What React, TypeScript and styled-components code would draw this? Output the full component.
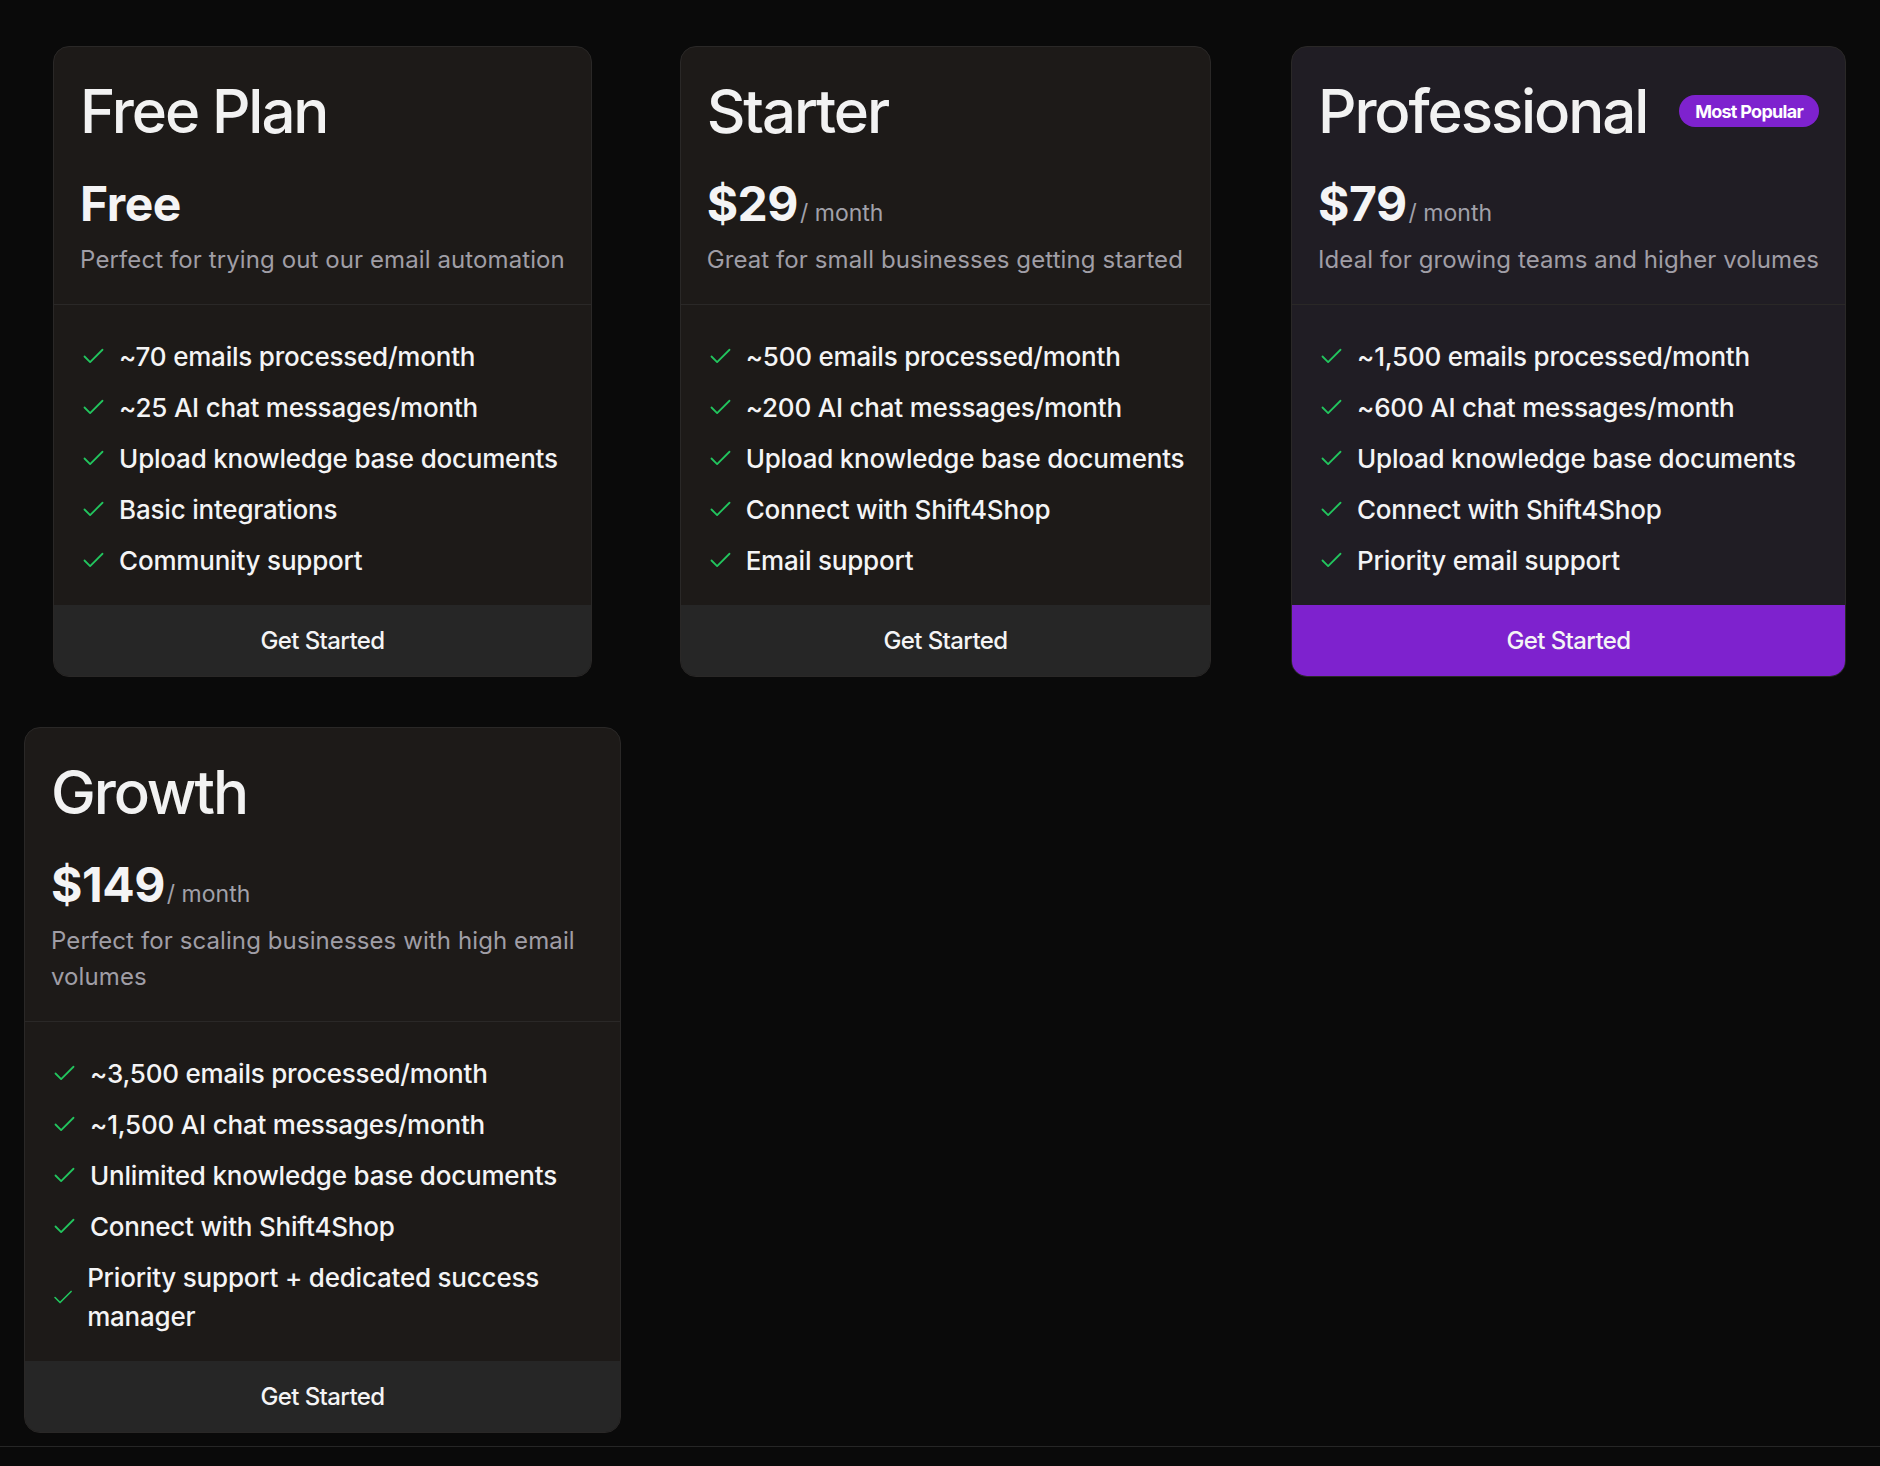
import React from 'react'
import styled, { createGlobalStyle } from 'styled-components'
import { Check } from 'lucide-react'

type Plan = {
  name: string
  price: string
  period?: string
  description: string
  features: string[]
  popular?: boolean
}

const plans: Plan[] = [
  {
    name: 'Free Plan',
    price: 'Free',
    description: 'Perfect for trying out our email automation',
    features: [
      '~70 emails processed/month',
      '~25 AI chat messages/month',
      'Upload knowledge base documents',
      'Basic integrations',
      'Community support',
    ],
  },
  {
    name: 'Starter',
    price: '$29',
    period: '/ month',
    description: 'Great for small businesses getting started',
    features: [
      '~500 emails processed/month',
      '~200 AI chat messages/month',
      'Upload knowledge base documents',
      'Connect with Shift4Shop',
      'Email support',
    ],
  },
  {
    name: 'Professional',
    price: '$79',
    period: '/ month',
    description: 'Ideal for growing teams and higher volumes',
    popular: true,
    features: [
      '~1,500 emails processed/month',
      '~600 AI chat messages/month',
      'Upload knowledge base documents',
      'Connect with Shift4Shop',
      'Priority email support',
    ],
  },
  {
    name: 'Growth',
    price: '$149',
    period: '/ month',
    description: 'Perfect for scaling businesses with high email volumes',
    features: [
      '~3,500 emails processed/month',
      '~1,500 AI chat messages/month',
      'Unlimited knowledge base documents',
      'Connect with Shift4Shop',
      'Priority support + dedicated success manager',
    ],
  },
]

const Pricing = () => {
  return (
    <Page>
      <GlobalStyle />
      <Main>
        <Grid>
          {plans.map((plan) => (
            <Card key={plan.name} $popular={plan.popular}>
              <Header>
                <TitleRow>
                  <Title>{plan.name}</Title>
                  {plan.popular && <Badge>Most Popular</Badge>}
                </TitleRow>
                <PriceRow>
                  <Price>{plan.price}</Price>
                  {plan.period && <Period>{plan.period}</Period>}
                </PriceRow>
                <Description>{plan.description}</Description>
              </Header>
              <FeatureList>
                {plan.features.map((f) => (
                  <FeatureItem key={f}>
                    <Check size={27} strokeWidth={1.6} color="#22c55e" />
                    <span>{f}</span>
                  </FeatureItem>
                ))}
              </FeatureList>
              <Button $popular={plan.popular}>Get Started</Button>
            </Card>
          ))}
        </Grid>
      </Main>
      <Footer />
    </Page>
  )
}

export default Pricing

const GlobalStyle = createGlobalStyle`
body {
  margin: 0;
  background: #0a0a0a;
  font-family: Inter, "Noto Sans", sans-serif;
  color: #f4f4f5;
}
`
const Page = styled.div`
min-height: 1466px;
display: flex;
flex-direction: column;
`
const Main = styled.main`
padding: 46px 0 13px 0;
`
const Grid = styled.div`
display: grid;
grid-template-columns: repeat(3, 597px);
column-gap: 26px;
row-gap: 50px;
padding-left: 24px;
justify-items: center;
align-items: start;
`
const Card = styled.div<{ $popular?: boolean }>`
max-width: 100%;
box-sizing: border-box;
display: flex;
flex-direction: column;
background: ${(p) => (p.$popular ? '#201d24' : '#1d1a18')};
border: 1px solid #2a2827;
border-radius: 16px;
overflow: hidden;
`
const Header = styled.div`
padding: 34px 26px 26px;
border-bottom: 1px solid #2a2827;
`
const TitleRow = styled.div`
display: flex;
align-items: center;
justify-content: space-between;
gap: 24px;
`
const Title = styled.h2`
margin: 0;
font-size: 60px;
line-height: 60px;
font-weight: 500;
letter-spacing: -0.035em;
color: #f2f2f2;
`
const Badge = styled.span`
background: #7e22ce;
color: #fff;
border-radius: 999px;
height: 32px;
padding: 0 16px;
display: inline-flex;
align-items: center;
font-size: 18px;
font-weight: 700;
letter-spacing: -0.04em;
`
const PriceRow = styled.div`
display: flex;
align-items: baseline;
margin-top: 39px;
`
const Price = styled.span`
font-size: 48px;
line-height: 48px;
font-weight: 700;
letter-spacing: -0.01em;
color: #f4f4f5;
`
const Period = styled.span`
font-size: 23px;
line-height: 24px;
color: #a1a1aa;
margin-left: 2px;
`
const Description = styled.p`
margin: 14px 0 0;
font-size: 24px;
line-height: 36px;
letter-spacing: 0.1px;
color: #a09ea6;
`
const FeatureList = styled.ul`
list-style: none;
margin: 0;
padding: 32px 26px 25px;
display: flex;
flex-direction: column;
gap: 12px;
`
const FeatureItem = styled.li`
display: flex;
align-items: center;
gap: 12px;
font-size: 26px;
line-height: 39px;
font-weight: 500;
letter-spacing: -0.008em;
color: #f4f4f5;
`
const Button = styled.button<{ $popular?: boolean }>`
border: 0;
width: 100%;
height: 71px;
background: ${(p) => (p.$popular ? '#7e22ce' : '#262626')};
color: #f4f4f5;
font-family: inherit;
font-size: 24px;
font-weight: 500;
letter-spacing: -0.025em;
cursor: pointer;
`
const Footer = styled.footer`
flex: 1;
border-top: 1px solid #262626;
`
